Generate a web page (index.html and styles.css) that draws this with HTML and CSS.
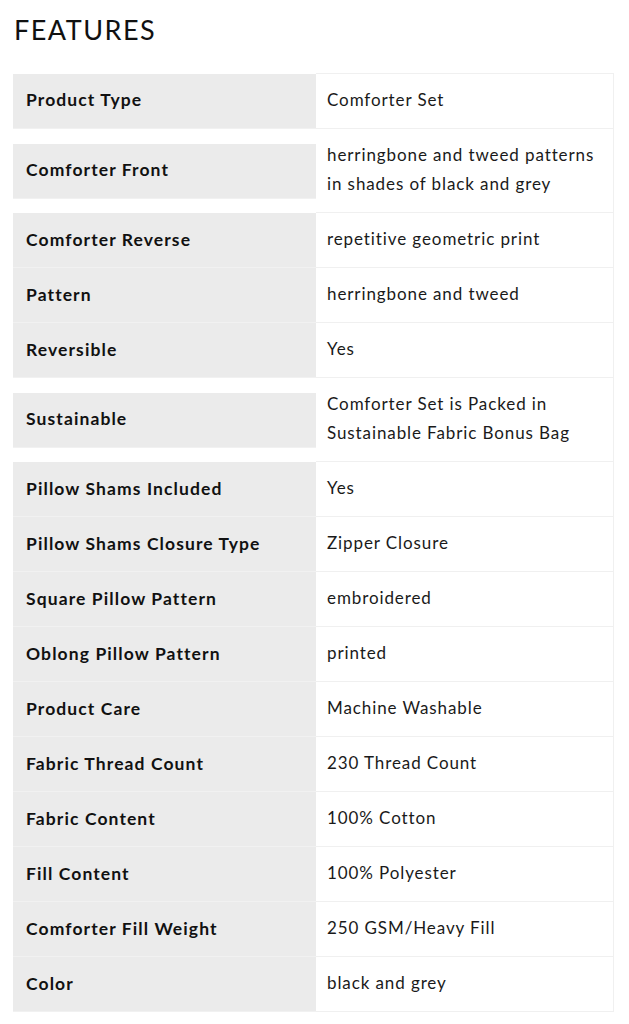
FILE: index.html
```html
<!DOCTYPE html>
<html>
<head>
<meta charset="utf-8">
<link rel="stylesheet" href="styles.css">
</head>
<body>
<div class="page">
  <h2 class="title">FEATURES</h2>
  <div class="specs">
    <div class="row"><div class="label">Product Type</div><div class="value">Comforter Set</div></div>
    <div class="row"><div class="label">Comforter Front</div><div class="value">herringbone and tweed patterns in shades of black and grey</div></div>
    <div class="row"><div class="label">Comforter Reverse</div><div class="value">repetitive geometric print</div></div>
    <div class="row"><div class="label">Pattern</div><div class="value">herringbone and tweed</div></div>
    <div class="row"><div class="label">Reversible</div><div class="value">Yes</div></div>
    <div class="row"><div class="label">Sustainable</div><div class="value">Comforter Set is Packed in Sustainable Fabric Bonus Bag</div></div>
    <div class="row"><div class="label">Pillow Shams Included</div><div class="value">Yes</div></div>
    <div class="row"><div class="label">Pillow Shams Closure Type</div><div class="value">Zipper Closure</div></div>
    <div class="row"><div class="label">Square Pillow Pattern</div><div class="value">embroidered</div></div>
    <div class="row"><div class="label">Oblong Pillow Pattern</div><div class="value">printed</div></div>
    <div class="row"><div class="label">Product Care</div><div class="value">Machine Washable</div></div>
    <div class="row"><div class="label">Fabric Thread Count</div><div class="value">230 Thread Count</div></div>
    <div class="row"><div class="label">Fabric Content</div><div class="value">100% Cotton</div></div>
    <div class="row"><div class="label">Fill Content</div><div class="value">100% Polyester</div></div>
    <div class="row"><div class="label">Comforter Fill Weight</div><div class="value">250 GSM/Heavy Fill</div></div>
    <div class="row"><div class="label">Color</div><div class="value">black and grey</div></div>
  </div>
</div>
</body>
</html>
```

FILE: styles.css
```css
html, body {
  margin: 0;
  padding: 0;
  background: #ffffff;
}
body {
  font-family: Lato, "Open Sans", sans-serif;
  color: #1a1a1a;
}
.page {
  padding: 14px 15px 0 13px;
}
.title {
  margin: 0 0 0 1px;
  font-weight: 400;
  font-size: 27px;
  line-height: 32px;
  letter-spacing: 1.5px;
  color: #111;
  height: 59px;
}
.specs {
  display: flex;
  flex-direction: column;
  width: 601px;
}
.row {
  display: grid;
  grid-template-columns: 303px 298px;
  align-items: center;
}
.label {
  box-sizing: border-box;
  background: #ebebeb;
  height: 55px;
  border-bottom: 1px solid #f1f1f1;
  display: flex;
  align-items: center;
  padding-left: 13px;
  padding-bottom: 2px;
  font-weight: 700;
  font-size: 17.5px;
  letter-spacing: 1.1px;
  color: #111;
}
.value {
  align-self: stretch;
  box-sizing: border-box;
  border-right: 1px solid #f0f0f0;
  border-bottom: 1px solid #f0f0f0;
  padding: 11px 10px 14px 11px;
  font-size: 17px;
  line-height: 29px;
  letter-spacing: 0.9px;
  color: #1a1a1a;
  display: flex;
  align-items: center;
}
.row:first-child .value {
  border-top: 1px solid #f0f0f0;
}
```
